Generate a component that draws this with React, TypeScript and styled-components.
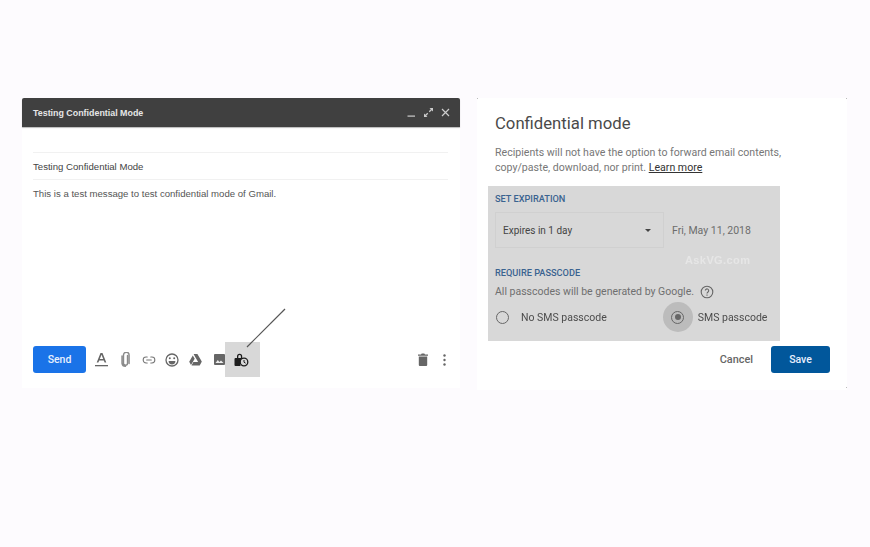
import React from 'react';
import styled, { createGlobalStyle } from 'styled-components';
import { Link2 } from 'lucide-react';

const GlobalStyle = createGlobalStyle`
  html, body {
    margin: 0;
    padding: 0;
    background: #fdfbfe;
    font-family: Roboto, "Liberation Sans", sans-serif;
  }
`;

const Page = styled.div`
  width: 870px;
  height: 547px;
  box-sizing: border-box;
  padding: 98px 23px 0 22px;
  display: flex;
  align-items: flex-start;
  gap: 17px;
  overflow: hidden;
  filter: blur(0.35px);
`;

const Compose = styled.section`
  position: relative;
  width: 438px;
  height: 290px;
  background: #fff;
  display: flex;
  flex-direction: column;
`;

const TitleBar = styled.header`
  height: 29px;
  flex: none;
  background: #404040;
  border-radius: 2px 2px 0 0;
  box-shadow: 0 1px 1px #bbb;
  padding: 0 10px 0 11px;
  display: flex;
  align-items: center;
  justify-content: space-between;
  color: #e6e6e6;
`;

const TitleText = styled.span`
  font: 700 8.9px "Liberation Sans", sans-serif;
`;

const WindowIcons = styled.div`
  display: flex;
  align-items: center;
  gap: 8px;
  svg {
    display: block;
  }
`;

const Fields = styled.div`
  flex: 1;
  padding: 25px 12px 0 11px;
  font: 9.6px "Liberation Sans", sans-serif;
  color: #444;
`;

const SubjectRow = styled.div`
  height: 26px;
  line-height: 27px;
  border-top: 1px solid #f1f1f1;
  border-bottom: 1px solid #f1f1f1;
`;

const MessageBody = styled.p`
  margin: 8px 0 0;
  line-height: 12px;
  color: #555;
`;

const ComposeFooter = styled.footer`
  height: 35px;
  flex: none;
  margin-bottom: 11px;
  padding: 0 11px;
  display: flex;
  align-items: center;
`;

const PrimaryButton = styled.button<{ $bg: string; $w: number; $h: number }>`
  width: ${p => p.$w}px;
  height: ${p => p.$h}px;
  border: 0;
  padding: 0;
  border-radius: 3px;
  background: ${p => p.$bg};
  color: #e8f0fe;
  font: 500 10.5px Roboto, sans-serif;
`;

const ToolIcons = styled.div`
  display: flex;
  align-items: center;
  margin-left: 4px;
`;

const ToolIcon = styled.span<{ $active?: boolean }>`
  width: ${p => (p.$active ? 35 : 23.5)}px;
  height: 35px;
  box-sizing: border-box;
  padding-right: ${p => (p.$active ? 3 : 0)}px;
  margin-left: ${p => (p.$active ? -6 : 0)}px;
  display: flex;
  align-items: center;
  justify-content: center;
  background: ${p => (p.$active ? '#d8d8d8' : 'transparent')};
  color: #666;
  svg {
    display: block;
  }
`;

const Spacer = styled.div`
  flex: 1;
`;

const TrailingIcons = styled.div`
  display: flex;
  align-items: center;
  gap: 14px;
  margin-right: 3px;
  color: #666;
  svg {
    display: block;
  }
`;

const Pointer = styled.svg`
  position: absolute;
  left: 222px;
  top: 209px;
  width: 44px;
  height: 42px;
`;

const Dialog = styled.section`
  position: relative;
  width: 370px;
  height: 292px;
  box-sizing: border-box;
  background: #fff;
  padding: 16px 17px 0 11px;
  display: flex;
  flex-direction: column;
`;

const Heading = styled.h2`
  margin: 0 0 0 7px;
  font: 400 16.7px/20px Roboto, sans-serif;
  color: #4a4a4a;
`;

const Intro = styled.p`
  margin: 11px 0 0 7px;
  font: 400 10.6px/15px Roboto, sans-serif;
  color: #777;
`;

const LearnMore = styled.a`
  color: #333;
  text-decoration: underline;
`;

const SettingsPanel = styled.div`
  position: relative;
  margin-top: 11px;
  width: 292px;
  height: 155px;
  box-sizing: border-box;
  background: #d8d8d8;
  padding: 8px 7px 0;
`;

const SectionLabel = styled.div<{ $gap?: number }>`
  margin-top: ${p => p.$gap ?? 0}px;
  font: 500 9.2px/10px Roboto, sans-serif;
  color: #3a6390;
`;

const ExpiryRow = styled.div`
  display: flex;
  align-items: center;
  margin-top: 8px;
`;

const ExpirySelect = styled.div`
  width: 169px;
  height: 36px;
  box-sizing: border-box;
  border: 1px solid #d0d0d0;
  padding: 0 12px 0 7px;
  display: flex;
  align-items: center;
  justify-content: space-between;
  font: 400 10px Roboto, sans-serif;
  color: #444;
`;

const Caret = styled.i`
  width: 0;
  height: 0;
  border-left: 3px solid transparent;
  border-right: 3px solid transparent;
  border-top: 3px solid #444;
`;

const ExpiryDate = styled.span`
  margin-left: 8px;
  font: 400 10.5px Roboto, sans-serif;
  color: #6c6c6c;
`;

const Hint = styled.div`
  margin-top: 5px;
  display: flex;
  align-items: center;
  gap: 6px;
  height: 17px;
  font: 400 10.5px Roboto, sans-serif;
  color: #6f6f6f;
  svg {
    display: block;
  }
`;

const RadioRow = styled.div`
  margin-top: 2px;
  display: flex;
  align-items: center;
  height: 30px;
  font: 400 10.5px Roboto, sans-serif;
  color: #4c4c4c;
`;

const RadioHalo = styled.span<{ $on?: boolean }>`
  width: 30px;
  height: 30px;
  flex: none;
  border-radius: 50%;
  display: flex;
  align-items: center;
  justify-content: center;
  background: ${p => (p.$on ? '#bcbcbc' : 'transparent')};
`;

const RadioDot = styled.span<{ $on?: boolean }>`
  width: 11px;
  height: 11px;
  border-radius: 50%;
  border: 1.5px solid #666;
  display: flex;
  align-items: center;
  justify-content: center;
  &::after {
    content: '';
    display: ${p => (p.$on ? 'block' : 'none')};
    width: 6px;
    height: 6px;
    border-radius: 50%;
    background: #666;
  }
`;

const NoOption = styled.span`
  margin: 0 56px 0 12px;
`;

const SmsOption = styled.span`
  margin-left: 5px;
`;

const NoHalo = styled(RadioHalo)`
  width: 14px;
`;

const Watermark = styled.span`
  position: absolute;
  left: 197px;
  top: 68px;
  font: 700 11px "Liberation Sans", sans-serif;
  letter-spacing: 0.4px;
  color: #e6e6e6;
`;

const DialogActions = styled.div`
  margin-top: 5px;
  display: flex;
  align-items: center;
  justify-content: flex-end;
  gap: 18px;
`;

const CancelButton = styled.button`
  border: 0;
  padding: 0;
  background: none;
  font: 500 10.9px Roboto, sans-serif;
  color: #666;
`;

const Corner = styled.i<{ $right?: boolean; $bottom?: boolean }>`
  position: absolute;
  width: 1px;
  height: 1px;
  background: #bbb;
  ${p => (p.$right ? 'right: 0;' : 'left: 0;')}
  ${p => (p.$bottom ? 'bottom: 2px;' : 'top: 0;')}
`;

const App = () => (
  <>
    <GlobalStyle />
    <Page>
      <Compose>
        <TitleBar>
          <TitleText>Testing Confidential Mode</TitleText>
          <WindowIcons>
            <svg width="9" height="9" viewBox="0 0 9 9"><rect x="0.5" y="7.5" width="7.5" height="1.2" fill="#ccc" /></svg>
            <svg width="9" height="9" viewBox="0 0 9 9" fill="#ccc"><path d="M5.500 0H9v3.500L7.700 2.200 5.700 4.200 4.800 3.300l2-2zM0 9V5.500l1.300 1.300 2-2 .9.9-2 2L3.500 9z" /></svg>
            <svg width="9" height="9" viewBox="0 0 9 9" stroke="#ccc" strokeWidth="1.200"><path d="M1 1l7 7M8 1L1 8" /></svg>
          </WindowIcons>
        </TitleBar>
        <Fields>
          <SubjectRow>Testing Confidential Mode</SubjectRow>
          <MessageBody>This is a test message to test confidential mode of Gmail.</MessageBody>
        </Fields>
        <ComposeFooter>
          <PrimaryButton $bg="#1a73e8" $w={53} $h={27}>Send</PrimaryButton>
          <ToolIcons>
            <ToolIcon>
              <svg width="13" height="14" viewBox="0 0 13 14" fill="#666"><path d="M5.500 0h2l3.800 9.500H9.600l-.8-2.100H4.200l-.8 2.100H1.700zM4.800 6h3.400L6.500 1.700z" /><rect y="12" width="13" height="1.300" /></svg>
            </ToolIcon>
            <ToolIcon>
              <svg width="9" height="15" viewBox="0 0 9 15" fill="none" stroke="#8a8a8a" strokeWidth="1.400"><path d="M6.500 3.500v7.700a2 2 0 0 1-4 0V3a2.800 2.800 0 0 1 5.600 0v8.500M1 4v7.300a3.500 3.500 0 0 0 3.500 3" strokeLinecap="round" /></svg>
            </ToolIcon>
            <ToolIcon>
              <Link2 size={14} strokeWidth={1.8} color="#777" />
            </ToolIcon>
            <ToolIcon>
              <svg width="14" height="14" viewBox="0 0 14 14"><circle cx="7" cy="7" r="6" fill="none" stroke="#666" strokeWidth="1.300" /><circle cx="4.800" cy="5.300" r="1" fill="#666" /><circle cx="9.200" cy="5.300" r="1" fill="#666" /><path d="M3.600 8h6.800a3.400 3.400 0 0 1-6.800 0z" fill="#666" /></svg>
            </ToolIcon>
            <ToolIcon>
              <svg width="13" height="12" viewBox="0 0 13 12" fill="#666"><path d="M4.600 0h3.800l4.400 7.600-1.900 3.400L6.500 3.400 4.600 0zM3.800 1.400l1.900 3.300L2 11 .2 7.700zM4.400 8h8.200l-1.900 3.400H2.500z" /></svg>
            </ToolIcon>
            <ToolIcon>
              <svg width="11" height="11" viewBox="0 0 11 11"><rect width="11" height="11" rx="1" fill="#666" /><path d="M1.500 9l2.300-3 1.600 2 1.600-1.500L9.500 9z" fill="#eee" /></svg>
            </ToolIcon>
            <ToolIcon $active>
              <svg width="15" height="14" viewBox="0 0 15 14"><path d="M3 5V3.400a2.600 2.600 0 0 1 5.200 0V5h1v2.200A4 4 0 0 0 6.600 13H1.400A1 1 0 0 1 .5 12V6a1 1 0 0 1 1-1zm1.300 0h2.600V3.400a1.300 1.300 0 0 0-2.600 0z" fill="#1d1d1d" /><circle cx="10" cy="9" r="3.800" fill="#d8d8d8" stroke="#1d1d1d" strokeWidth="1.300" /><path d="M10 7v2.200l1.600 1" fill="none" stroke="#1d1d1d" strokeWidth="1" /></svg>
            </ToolIcon>
          </ToolIcons>
          <Spacer />
          <TrailingIcons>
            <svg width="12" height="13" viewBox="0 0 12 13" fill="#666"><path d="M1 1.500h3L4.700.6h2.600l.7.900h3v1.300H1zM1.800 3.600h8.400V12a1 1 0 0 1-1 1H2.800a1 1 0 0 1-1-1z" /></svg>
            <svg width="3" height="12" viewBox="0 0 3 12" fill="#666"><circle cx="1.500" cy="1.500" r="1.200" /><circle cx="1.500" cy="6" r="1.200" /><circle cx="1.500" cy="10.500" r="1.200" /></svg>
          </TrailingIcons>
        </ComposeFooter>
        <Pointer viewBox="0 0 44 42">
          <path d="M41 2L3 40" stroke="#555" strokeWidth="1.200" fill="none" />
        </Pointer>
      </Compose>
      <Dialog>
        <Corner />
        <Corner $right />
        <Corner $right $bottom />
        <Heading>Confidential mode</Heading>
        <Intro>
          Recipients will not have the option to forward email contents,
          <br />
          copy/paste, download, nor print. <LearnMore>Learn more</LearnMore>
        </Intro>
        <SettingsPanel>
          <SectionLabel>SET EXPIRATION</SectionLabel>
          <ExpiryRow>
            <ExpirySelect>
              Expires in 1 day
              <Caret />
            </ExpirySelect>
            <ExpiryDate>Fri, May 11, 2018</ExpiryDate>
          </ExpiryRow>
          <SectionLabel $gap={20}>REQUIRE PASSCODE</SectionLabel>
          <Hint>
            All passcodes will be generated by Google.
            <svg width="14" height="14" viewBox="0 0 14 14" fill="none" stroke="#666"><circle cx="7" cy="7" r="5.800" strokeWidth="1.100" /><path d="M5.300 5.600a1.700 1.700 0 1 1 2.700 1.400c-.7.500-1 .8-1 1.500" strokeWidth="1.100" /><path d="M7 9.600v1.200" strokeWidth="1.100" /></svg>
          </Hint>
          <RadioRow>
            <NoHalo>
              <RadioDot />
            </NoHalo>
            <NoOption>No SMS passcode</NoOption>
            <RadioHalo $on>
              <RadioDot $on />
            </RadioHalo>
            <SmsOption>SMS passcode</SmsOption>
          </RadioRow>
          <Watermark>AskVG.com</Watermark>
        </SettingsPanel>
        <DialogActions>
          <CancelButton>Cancel</CancelButton>
          <PrimaryButton $bg="#01579b" $w={59} $h={27}>Save</PrimaryButton>
        </DialogActions>
      </Dialog>
    </Page>
  </>
);

export default App;
